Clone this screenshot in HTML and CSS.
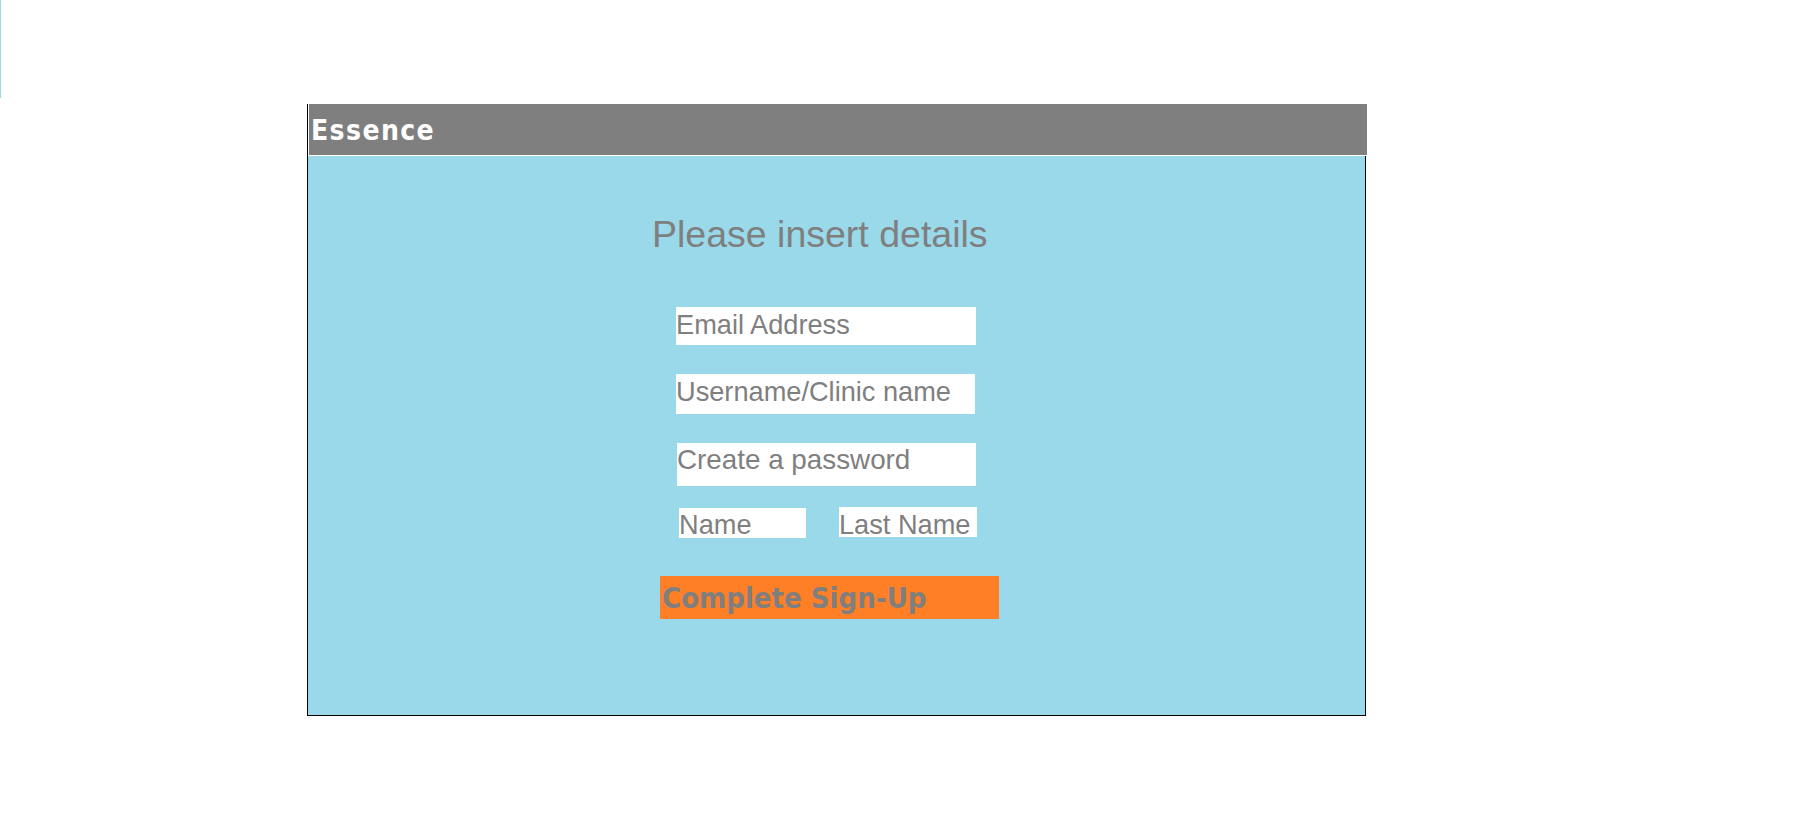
FILE: index.html
```html
<!DOCTYPE html>
<html lang="en">
<head>
<meta charset="utf-8">
<title>Essence - Sign Up</title>
<link rel="stylesheet" href="styles.css">
</head>
<body>
<div class="stripe"></div>
<div class="card">
  <div class="card-header">Essence</div>
  <div class="card-body">
    <h1 class="title">Please insert details</h1>
    <div class="field field-email">Email Address</div>
    <div class="field field-user">Username/Clinic name</div>
    <div class="field field-pass">Create a password</div>
    <div class="name-row">
      <div class="field field-first">Name</div>
      <div class="field field-last">Last Name</div>
    </div>
    <div class="submit">Complete Sign-Up</div>
  </div>
</div>
</body>
</html>
```

FILE: styles.css
```css
html, body {
  margin: 0;
  padding: 0;
  background: #ffffff;
}

body {
  font-family: "Liberation Sans", Arial, sans-serif;
}

.stripe {
  width: 1px;
  height: 98px;
  background: #99d9ea;
}

.card {
  margin: 6px 0 0 307px;
  width: 1057px;
  border-left: 1px solid #000;
  border-right: 1px solid #000;
  border-bottom: 1px solid #000;
  background: #99d9ea;
}

.card-header {
  margin-right: -2px;
  height: 38px;
  padding: 13px 0 0 2px;
  background: #7f7f7f;
  border-left: 1px solid #fff;
  border-bottom: 1px solid #fff;
  color: #ffffff;
  font-family: "DejaVu Sans Condensed", "DejaVu Sans", sans-serif;
  font-weight: bold;
  font-size: 28px;
  line-height: 28px;
  letter-spacing: 1.4px;
}

.card-body {
  display: flex;
  flex-direction: column;
  align-items: flex-start;
  padding: 60px 0 96px 0;
}

.title {
  margin: 0 0 54px 344px;
  font-family: "Liberation Sans", Arial, sans-serif;
  font-weight: normal;
  font-size: 37.5px;
  line-height: 37px;
  color: #7f7f7f;
}

.field {
  background: #ffffff;
  color: #7f7f7f;
  font-family: "Liberation Sans", Arial, sans-serif;
  font-size: 27.2px;
  line-height: 27px;
  white-space: nowrap;
  box-sizing: border-box;
}

.field-email {
  margin-left: 368px;
  width: 300px;
  height: 38px;
  padding-top: 4px;
}

.field-user {
  margin: 29px 0 0 368px;
  width: 299px;
  height: 40px;
  padding-top: 4px;
}

.field-pass {
  margin: 29px 0 0 369px;
  width: 299px;
  height: 43px;
  padding-top: 3px;
  font-size: 27.8px;
}

.name-row {
  display: flex;
  align-items: flex-start;
  gap: 33px;
  margin: 21px 0 0 371px;
}

.field-first {
  margin-top: 1px;
  width: 127px;
  height: 30px;
  padding-top: 3px;
}

.field-last {
  width: 138px;
  height: 30px;
  padding-top: 4px;
}

.submit {
  margin: 38px 0 0 352px;
  width: 339px;
  height: 43px;
  box-sizing: border-box;
  padding: 8px 0 0 2px;
  background: #ff7f27;
  color: #7f7f7f;
  font-family: "DejaVu Sans Condensed", "DejaVu Sans", sans-serif;
  font-weight: bold;
  font-size: 29px;
  line-height: 29px;
  white-space: nowrap;
}
```
